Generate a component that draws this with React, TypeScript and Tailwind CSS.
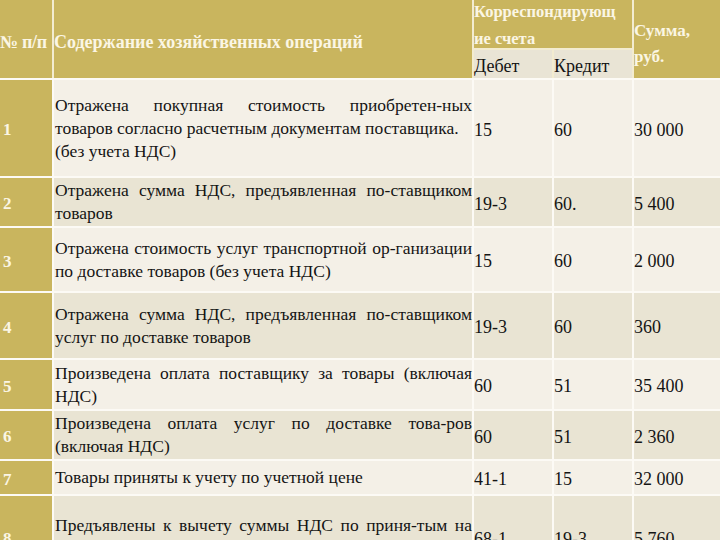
import React from "react";

type Row = {
  n: string;
  lines: { t: string; j?: boolean }[];
  debit: string;
  credit: string;
  sum: string;
  h: string;
};

const rows: Row[] = [
  {
    n: "1",
    lines: [
      { t: "Отражена покупная стоимость приобретен-ных", j: true },
      { t: "товаров согласно расчетным документам поставщика." },
      { t: "(без учета НДС)" },
    ],
    debit: "15",
    credit: "60",
    sum: "30 000",
    h: "h-[96px]",
  },
  {
    n: "2",
    lines: [
      { t: "Отражена сумма НДС, предъявленная по-ставщиком", j: true },
      { t: "товаров" },
    ],
    debit: "19-3",
    credit: "60.",
    sum: "5 400",
    h: "h-[48px]",
  },
  {
    n: "3",
    lines: [
      { t: "Отражена стоимость услуг транспортной ор-ганизации", j: true },
      { t: "по доставке товаров (без учета НДС)" },
    ],
    debit: "15",
    credit: "60",
    sum: "2 000",
    h: "h-[63px]",
  },
  {
    n: "4",
    lines: [
      { t: "Отражена сумма НДС, предъявленная по-ставщиком", j: true },
      { t: "услуг по доставке товаров" },
    ],
    debit: "19-3",
    credit: "60",
    sum: "360",
    h: "h-[65px]",
  },
  {
    n: "5",
    lines: [
      { t: "Произведена оплата поставщику за товары (включая", j: true },
      { t: "НДС)" },
    ],
    debit: "60",
    credit: "51",
    sum: "35 400",
    h: "h-[49px]",
  },
  {
    n: "6",
    lines: [
      { t: "Произведена оплата услуг по доставке това-ров", j: true },
      { t: "(включая НДС)" },
    ],
    debit: "60",
    credit: "51",
    sum: "2 360",
    h: "h-[48px]",
  },
  {
    n: "7",
    lines: [{ t: "Товары приняты к учету по учетной цене" }],
    debit: "41-1",
    credit: "15",
    sum: "32 000",
    h: "h-[33px]",
  },
  {
    n: "8",
    lines: [
      { t: "Предъявлены к вычету суммы НДС по приня-тым на", j: true },
      { t: "учет товарам и услугам" },
    ],
    debit: "68-1",
    credit: "19-3",
    sum: "5 760",
    h: "h-[82px]",
  },
];

export default function App() {
  return (
    <div
      className="w-[720px] h-[540px] overflow-hidden bg-[#fcfaf5] text-[#141414]"
      style={{ fontFamily: '"Liberation Serif", "Times New Roman", serif' }}
    >
      {/* Header */}
      <div className="grid grid-cols-[52px_418px_78px_78px_1fr] grid-rows-[48px_28px] gap-[2px] bg-[#f3ecd0] font-bold text-[18px] text-[#fbf6e4]">
        <div className="row-span-2 bg-[#c9b55e] flex items-center pt-[6px] whitespace-nowrap tracking-[-0.3px]">№ п/п</div>
        <div className="row-span-2 bg-[#c9b55e] flex items-center pt-[6px] whitespace-nowrap">
          Содержание хозяйственных операций
        </div>
        <div className="col-span-2 bg-[#c9b55e] text-[16.5px] leading-[27px] whitespace-nowrap -mt-[2px]">
          Корреспондирующ
          <br />
          ие счета
        </div>
        <div className="row-span-2 bg-[#c9b55e] text-[17px] pt-[18px] leading-[26px]">
          Сумма,
          <br />
          руб.
        </div>
        <div className="bg-[#e9e4d5] font-normal text-[#141414] flex items-center pt-[4px]">Дебет</div>
        <div className="bg-[#e9e4d5] font-normal text-[#141414] flex items-center pt-[4px]">Кредит</div>
      </div>

      {/* Body */}
      <div className="flex flex-col gap-[2px] mt-[2px]">
        {rows.map((r, i) => {
          const bg = i % 2 === 0 ? "bg-[#f4f0e7]" : "bg-[#e9e4d3]";
          return (
            <div key={r.n} className={`grid grid-cols-[52px_418px_78px_78px_1fr] gap-[2px] ${r.h}`}>
              <div className="bg-[#c9b55e] flex items-center pl-[3px] pt-[4px] font-bold text-[17px] text-[#fbf6e4]">
                {r.n}
              </div>
              <div className={`${bg} flex flex-col justify-center text-[17.5px] leading-[23px] pl-[1px]`}>
                {r.lines.map((l, k) =>
                  l.j ? (
                    <div key={k} className="text-justify [text-align-last:justify] whitespace-nowrap">
                      {l.t}
                    </div>
                  ) : (
                    <div key={k} className="whitespace-nowrap">
                      {l.t}
                    </div>
                  )
                )}
              </div>
              <div className={`${bg} flex items-center text-[18px] pt-[4px]`}>{r.debit}</div>
              <div className={`${bg} flex items-center text-[18px] pt-[4px]`}>{r.credit}</div>
              <div className={`${bg} flex items-center text-[18px] pt-[4px]`}>{r.sum}</div>
            </div>
          );
        })}
      </div>
    </div>
  );
}
